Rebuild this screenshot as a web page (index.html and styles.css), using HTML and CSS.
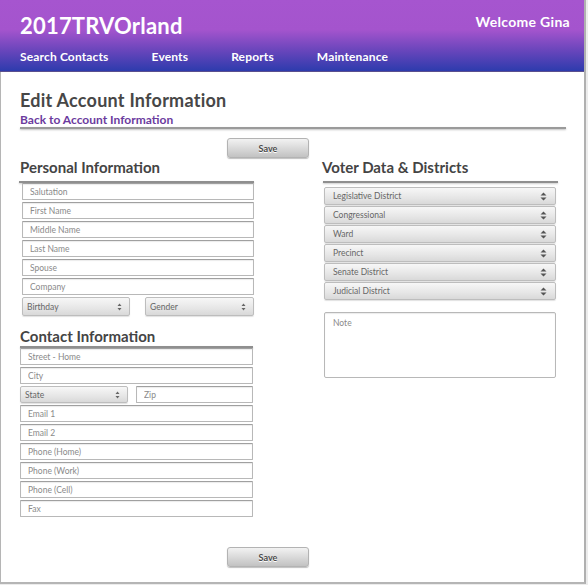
FILE: index.html
```html
<!DOCTYPE html>
<html>
<head>
<meta charset="utf-8">
<title>Edit Account Information</title>
<link rel="stylesheet" href="styles.css">
</head>
<body>
<div class="frame">
  <header class="header">
    <div class="top-row">
      <div class="brand">2017TRVOrland</div>
      <div class="welcome">Welcome Gina</div>
    </div>
    <nav class="nav">
      <a>Search Contacts</a>
      <a>Events</a>
      <a>Reports</a>
      <a>Maintenance</a>
    </nav>
  </header>

  <main class="content">
    <h1 class="page-title">Edit Account Information</h1>
    <a class="back-link">Back to Account Information</a>
    <div class="rule"></div>

    <div class="actions"><button class="btn">Save</button></div>

    <div class="columns">
      <section class="col col-left">
        <h2 class="section-title">Personal Information</h2>
        <div class="section-rule wide"></div>
        <div class="fields indent">
          <input class="field" placeholder="Salutation">
          <input class="field" placeholder="First Name">
          <input class="field" placeholder="Middle Name">
          <input class="field" placeholder="Last Name">
          <input class="field" placeholder="Spouse">
          <input class="field" placeholder="Company">
          <div class="pair gap15">
            <div class="select w108"><span>Birthday</span><svg class="arrows" width="5" height="8" viewBox="0 0 5 8"><path d="M0.5 3 L2.5 0.5 L4.5 3 Z M0.5 5 L2.5 7.5 L4.5 5 Z" fill="#666"/></svg></div>
            <div class="select grow"><span>Gender</span><svg class="arrows" width="5" height="8" viewBox="0 0 5 8"><path d="M0.5 3 L2.5 0.5 L4.5 3 Z M0.5 5 L2.5 7.5 L4.5 5 Z" fill="#666"/></svg></div>
          </div>
        </div>

        <h2 class="section-title contact-title">Contact Information</h2>
        <div class="section-rule contact-rule"></div>
        <div class="fields">
          <input class="field" placeholder="Street - Home">
          <input class="field" placeholder="City">
          <div class="pair gap8">
            <div class="select w108 short"><span>State</span><svg class="arrows" width="5" height="8" viewBox="0 0 5 8"><path d="M0.5 3 L2.5 0.5 L4.5 3 Z M0.5 5 L2.5 7.5 L4.5 5 Z" fill="#666"/></svg></div>
            <input class="field grow" placeholder="Zip">
          </div>
          <input class="field" placeholder="Email 1">
          <input class="field" placeholder="Email 2">
          <input class="field" placeholder="Phone (Home)">
          <input class="field" placeholder="Phone (Work)">
          <input class="field" placeholder="Phone (Cell)">
          <input class="field" placeholder="Fax">
        </div>
      </section>

      <section class="col col-right">
        <h2 class="section-title">Voter Data &amp; Districts</h2>
        <div class="section-rule right-rule"></div>
        <div class="selects">
          <div class="select tall"><span>Legislative District</span><svg class="arrows big" width="7" height="9" viewBox="0 0 7 9"><path d="M0.5 3.5 L3.5 0.5 L6.5 3.5 Z M0.5 5.5 L3.5 8.5 L6.5 5.5 Z" fill="#555"/></svg></div>
          <div class="select tall"><span>Congressional</span><svg class="arrows big" width="7" height="9" viewBox="0 0 7 9"><path d="M0.5 3.5 L3.5 0.5 L6.5 3.5 Z M0.5 5.5 L3.5 8.5 L6.5 5.5 Z" fill="#555"/></svg></div>
          <div class="select tall"><span>Ward</span><svg class="arrows big" width="7" height="9" viewBox="0 0 7 9"><path d="M0.5 3.5 L3.5 0.5 L6.5 3.5 Z M0.5 5.5 L3.5 8.5 L6.5 5.5 Z" fill="#555"/></svg></div>
          <div class="select tall"><span>Precinct</span><svg class="arrows big" width="7" height="9" viewBox="0 0 7 9"><path d="M0.5 3.5 L3.5 0.5 L6.5 3.5 Z M0.5 5.5 L3.5 8.5 L6.5 5.5 Z" fill="#555"/></svg></div>
          <div class="select tall"><span>Senate District</span><svg class="arrows big" width="7" height="9" viewBox="0 0 7 9"><path d="M0.5 3.5 L3.5 0.5 L6.5 3.5 Z M0.5 5.5 L3.5 8.5 L6.5 5.5 Z" fill="#555"/></svg></div>
          <div class="select tall"><span>Judicial District</span><svg class="arrows big" width="7" height="9" viewBox="0 0 7 9"><path d="M0.5 3.5 L3.5 0.5 L6.5 3.5 Z M0.5 5.5 L3.5 8.5 L6.5 5.5 Z" fill="#555"/></svg></div>
        </div>
        <textarea class="note" placeholder="Note"></textarea>
      </section>
    </div>

    <div class="actions bottom"><button class="btn">Save</button></div>
  </main>
</div>
</body>
</html>
```

FILE: styles.css
```css
* { box-sizing: border-box; }

html, body {
  margin: 0;
  padding: 0;
  background: #ececec;
  font-family: Lato, "Open Sans", "DejaVu Sans", sans-serif;
}

.frame {
  width: 586px;
  height: 584px;
  background: #fff;
  border-left: 1px solid #b5b5b5;
  border-right: 2px solid #b0b0b0;
  border-bottom: 2px solid #b5b5b5;
  display: flex;
  flex-direction: column;
}

.header {
  height: 72px;
  margin-left: -1px;
  padding: 13px 14px 0 20px;
  background: linear-gradient(180deg, #a655cf 0%, #a454cd 42%, #6f47bd 68%, #2d3bad 100%);
  border-bottom: 1px solid #5a4f8e;
  color: #fff;
}

.top-row {
  display: flex;
  justify-content: space-between;
  align-items: flex-start;
}

.brand {
  font-size: 22px;
  line-height: 26px;
  font-weight: 700;
  letter-spacing: 0.2px;
}

.welcome {
  font-size: 14px;
  line-height: 18px;
  font-weight: 700;
  letter-spacing: 0.3px;
}

.nav {
  display: flex;
  gap: 43px;
  margin-top: 10px;
  font-size: 12px;
  line-height: 16px;
  font-weight: 700;
  letter-spacing: 0.15px;
}

.content {
  padding: 0 18px 0 19px;
  display: flex;
  flex-direction: column;
}

.page-title {
  margin: 17px 0 0;
  font-size: 18px;
  line-height: 22px;
  font-weight: 700;
  color: #474747;
  letter-spacing: 0.25px;
}

.back-link {
  margin-top: 2px;
  font-size: 12px;
  line-height: 14px;
  font-weight: 700;
  color: #6b3b9e;
}

.rule {
  height: 2px;
  background: #9a9a9a;
  box-shadow: 0 1px 2px rgba(0,0,0,0.25);
}

.actions {
  display: flex;
  padding-left: 207px;
  margin-top: 9px;
}

.actions.bottom {
  margin-top: 30px;
}

.btn {
  width: 82px;
  height: 20px;
  padding: 0;
  border: 1px solid #b3b3b3;
  border-radius: 3px;
  background: linear-gradient(180deg, #f2f2f2 0%, #dadada 50%, #c2c2c2 100%);
  box-shadow: 0 1px 1px rgba(0,0,0,0.25);
  font-family: inherit;
  font-size: 9px;
  font-weight: 700;
  color: #4a4a4a;
  text-shadow: 0 1px 0 #fff;
}

.columns {
  display: flex;
  gap: 67px;
}

.col-left { width: 235px; }
.col-right { width: 236px; }

.section-title {
  margin: 0;
  font-size: 15px;
  line-height: 18px;
  font-weight: 700;
  color: #444;
}

.contact-title {
  margin-top: 11px;
}

.section-rule {
  margin-top: 5px;
  height: 2px;
  background: #8f8f8f;
  box-shadow: 0 1px 2px rgba(0,0,0,0.2);
  width: 233px;
}

.section-rule.wide { width: 235px; margin-left: -1px; }
.section-rule.contact-rule { margin-top: 1px; }
.section-rule.right-rule { margin-left: 1px; width: 235px; }

.fields {
  display: flex;
  flex-direction: column;
  gap: 2px;
  width: 233px;
}

.fields.indent {
  margin-left: 2px;
  width: 232px;
}

.field {
  display: block;
  width: 100%;
  min-width: 0;
  height: 17px;
  margin: 0;
  padding: 0 0 0 7px;
  border: 1px solid #b8b8b8;
  border-top-color: #a0a0a0;
  border-radius: 1px;
  background: #fff;
  box-shadow: inset 0 1px 1px rgba(0,0,0,0.08);
  font-family: inherit;
  font-size: 8.5px;
  color: #777;
}

.field::placeholder,
.note::placeholder {
  color: #8a8a8a;
  opacity: 1;
}

.pair {
  display: flex;
}

.gap15 { gap: 15px; }
.gap8 { gap: 8px; }

.w108 { width: 108px; flex: none; }
.grow { flex: 1 1 0; width: auto; min-width: 0; }

.select {
  height: 19px;
  display: flex;
  align-items: center;
  justify-content: space-between;
  padding: 0 7px 0 4px;
  border: 1px solid #bdbdbd;
  border-radius: 2px;
  background: linear-gradient(180deg, #f7f7f7 0%, #e6e6e6 60%, #d9d9d9 100%);
  box-shadow: 0 1px 1px rgba(0,0,0,0.12);
  font-size: 8.5px;
  color: #666;
}

.select.short { height: 17px; }

.selects {
  margin-top: 4px;
  margin-left: 2px;
  width: 232px;
  display: flex;
  flex-direction: column;
  gap: 1px;
}

.select.tall {
  height: 18px;
  padding: 0 8px;
}

.note {
  display: block;
  margin: 12px 0 0 2px;
  width: 232px;
  height: 66px;
  padding: 5px 8px;
  border: 1px solid #b8b8b8;
  border-radius: 2px;
  resize: none;
  font-family: inherit;
  font-size: 8.5px;
  color: #777;
  box-shadow: inset 0 1px 1px rgba(0,0,0,0.08);
}
```
